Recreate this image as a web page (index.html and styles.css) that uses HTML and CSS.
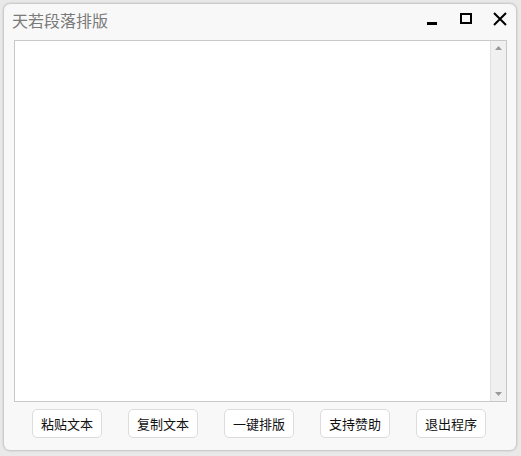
FILE: index.html
```html
<!DOCTYPE html>
<html>
   <head>
      <title>天若段落排版</title>
      <link rel="stylesheet" href="styles.css">
   </head>
   <body>
   <div class="window">
      <div class="titlebar">
         <span class="title">天若段落排版</span>
         <div class="controls">
            <svg class="ctl" width="14" height="14" viewBox="0 0 14 14"><rect x="2" y="10" width="10" height="3" fill="#000"/></svg>
            <svg class="ctl" width="14" height="14" viewBox="0 0 14 14"><rect x="2" y="2" width="10" height="9" fill="none" stroke="#000" stroke-width="2"/></svg>
            <svg class="ctl" width="14" height="14" viewBox="0 0 14 14"><path d="M1 1L13 13M13 1L1 13" stroke="#000" stroke-width="2"/></svg>
         </div>
      </div>
      <div class="editor">
         <div class="text"></div>
         <div class="scroll">
            <svg width="7" height="4" viewBox="0 0 7 4"><path d="M0 4L3.5 0L7 4Z" fill="#999"/></svg>
            <svg width="7" height="4" viewBox="0 0 7 4"><path d="M0 0L3.5 4L7 0Z" fill="#999"/></svg>
         </div>
      </div>
      <div class="buttons">
         <button class="btn">粘贴文本</button>
         <button class="btn">复制文本</button>
         <button class="btn">一键排版</button>
         <button class="btn">支持赞助</button>
         <button class="btn">退出程序</button>
      </div>
   </div>
   </body>
</html>
```

FILE: styles.css
```css
body { margin:0; background:#e9e9e9; font-family:"Noto Sans CJK SC", sans-serif; }
.window { margin:4px; width:512px; height:446px; box-sizing:border-box;
          background:#f8f8f8; border-radius:6px; box-shadow:0 0 3px rgba(0,0,0,.35);
          display:flex; flex-direction:column; }
.titlebar { height:36px; display:flex; align-items:center; justify-content:space-between; }
.title { color:#7a7a7a; font-size:16px; padding-left:8px; margin-top:-4px; }
.controls { display:flex; gap:20px; padding-right:9px; margin-top:-6px; }
.editor { margin:0 9px 0 10px; height:362px; box-sizing:border-box; border:1px solid #c8c8c8;
          background:#fff; display:flex; }
.text { flex:1; }
.scroll { width:15px; background:#f0f0f0; border-left:1px solid #e0e0e0;
          display:flex; flex-direction:column; justify-content:space-between; align-items:center;
          padding:5px 0; }
.buttons { display:flex; gap:26px; padding-left:28px; margin-top:7px; }
.btn { width:70px; height:29px; background:#fff; border:1px solid #dcdcdc; border-radius:5px;
       font-family:"Noto Sans CJK SC", sans-serif; font-size:13px; color:#111; padding:0; }
```
